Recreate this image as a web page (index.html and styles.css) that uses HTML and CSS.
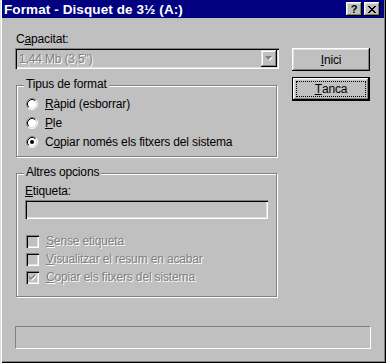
FILE: index.html
```html
<!DOCTYPE html>
<html lang="ca">
<head>
    <meta charset="UTF-8">
    <title>Format - Disquet de 3½ (A:)</title>
    <link rel="stylesheet" href="styles.css">
</head>
<body>

<div class="window">
    <div class="titlebar">
        <span class="title">Format - Disquet de 3½ (A:)</span>
        <div class="caption-btns">
            <span class="cap-btn help">?</span>
            <span class="cap-btn">
                <svg width="8" height="7" viewBox="0 0 8 7">
                    <path d="M0 0h2v1h1v1h2v-1h1v-1h2v1h-1v1h-1v1h-1v1h1v1h1v1h1v1h-2v-1h-1v-1h-2v1h-1v1h-2v-1h1v-1h1v-1h1v-1h-1v-1h-1v-1h-1z" fill="#000"/>
                </svg>
            </span>
        </div>
    </div>

    <div class="dialog">
        <div class="main-col">
            <div class="field-label">C<u>a</u>pacitat:</div>
            <div class="combo">
                <span class="combo-text disabled">1,44 Mb (3,5")</span>
                <span class="combo-btn">
                    <svg width="8" height="5" viewBox="0 0 8 5">
                        <polygon points="1,1 8,1 4.5,5" fill="#fff"/>
                        <polygon points="0,0 7,0 3.5,4" fill="#808080"/>
                    </svg>
                </span>
            </div>

            <div class="group group-format">
                <span class="group-title">Tipus de format</span>
                <div class="option">
                    <svg class="radio" width="12" height="12" viewBox="0 0 12 12">
                        <circle cx="6" cy="6" r="4.5" fill="#fff"/>
                        <path d="M2.11 9.89A5.5 5.5 0 0 1 9.89 2.11" stroke="#808080" fill="none"/>
                        <path d="M9.89 2.11A5.5 5.5 0 0 1 2.11 9.89" stroke="#fff" fill="none"/>
                        <path d="M2.82 9.18A4.5 4.5 0 0 1 9.18 2.82" stroke="#000" fill="none"/>
                        <path d="M9.18 2.82A4.5 4.5 0 0 1 2.82 9.18" stroke="#dfdfdf" fill="none"/>
                    </svg>
                    <span><u>R</u>àpid (esborrar)</span>
                </div>
                <div class="option">
                    <svg class="radio" width="12" height="12" viewBox="0 0 12 12">
                        <circle cx="6" cy="6" r="4.5" fill="#fff"/>
                        <path d="M2.11 9.89A5.5 5.5 0 0 1 9.89 2.11" stroke="#808080" fill="none"/>
                        <path d="M9.89 2.11A5.5 5.5 0 0 1 2.11 9.89" stroke="#fff" fill="none"/>
                        <path d="M2.82 9.18A4.5 4.5 0 0 1 9.18 2.82" stroke="#000" fill="none"/>
                        <path d="M9.18 2.82A4.5 4.5 0 0 1 2.82 9.18" stroke="#dfdfdf" fill="none"/>
                    </svg>
                    <span><u>P</u>le</span>
                </div>
                <div class="option">
                    <svg class="radio" width="12" height="12" viewBox="0 0 12 12">
                        <circle cx="6" cy="6" r="4.5" fill="#fff"/>
                        <path d="M2.11 9.89A5.5 5.5 0 0 1 9.89 2.11" stroke="#808080" fill="none"/>
                        <path d="M9.89 2.11A5.5 5.5 0 0 1 2.11 9.89" stroke="#fff" fill="none"/>
                        <path d="M2.82 9.18A4.5 4.5 0 0 1 9.18 2.82" stroke="#000" fill="none"/>
                        <path d="M9.18 2.82A4.5 4.5 0 0 1 2.82 9.18" stroke="#dfdfdf" fill="none"/>
                        <circle cx="6" cy="6" r="2" fill="#000"/>
                    </svg>
                    <span>C<u>o</u>piar només els fitxers del sistema</span>
                </div>
            </div>

            <div class="group group-other">
                <span class="group-title">Altres opcions</span>
                <div class="field-label inner"><u>E</u>tiqueta:</div>
                <div class="textbox"></div>
                <div class="check-list">
                    <div class="option check">
                        <span class="checkbox"></span>
                        <span class="disabled"><u>S</u>ense etiqueta</span>
                    </div>
                    <div class="option check">
                        <span class="checkbox"></span>
                        <span class="disabled"><u>V</u>isualitzar el resum en acabar</span>
                    </div>
                    <div class="option check">
                        <span class="checkbox">
                            <svg width="9" height="9" viewBox="0 0 9 9">
                                <path d="M2 4l2 2 4-4v2l-4 4-2-2z" fill="#fff"/>
                                <path d="M1 3l2 2 4-4v2l-4 4-2-2z" fill="#808080"/>
                            </svg>
                        </span>
                        <span class="disabled"><u>C</u>opiar els fitxers del sistema</span>
                    </div>
                </div>
            </div>
        </div>

        <div class="side-col">
            <div class="btn"><span class="btn-face"><u>I</u>nici</span></div>
            <div class="btn default"><span class="btn-face focus"><u>T</u>anca</span></div>
        </div>
    </div>

    <div class="status"></div>
</div>

</body>
</html>
```

FILE: styles.css
```css
body {
    margin: 0;
    font-family: "Liberation Sans", Arial, sans-serif;
    font-size: 12px;
    letter-spacing: -0.15px;
    color: #000;
    background-color: #c0c0c0;
}
.window {
    width: 386px;
    height: 363px;
    box-sizing: border-box;
    padding: 0 2px 2px 2px;
    background-color: #c0c0c0;
    box-shadow: inset 1px 0 #dfdfdf, inset 2px 0 #fff, inset -1px -1px #000, inset -2px -2px #808080;
}
.titlebar {
    height: 18px;
    background-color: #000080;
    display: flex;
    align-items: center;
    justify-content: space-between;
    padding: 0 4px 0 2px;
}
.title {
    color: #fff;
    font-weight: bold;
    font-size: 13.5px;
    letter-spacing: 0.1px;
}
.caption-btns {
    display: flex;
    gap: 2px;
}
.cap-btn {
    width: 16px;
    height: 14px;
    background-color: #c0c0c0;
    box-shadow: inset -1px -1px #000, inset 1px 1px #fff, inset -2px -2px #808080, inset 2px 2px #dfdfdf;
    display: flex;
    align-items: center;
    justify-content: center;
}
.cap-btn.help {
    font-weight: bold;
    font-size: 11px;
    line-height: 14px;
}
.dialog {
    display: flex;
}
.main-col {
    margin-left: 14px;
    width: 261px;
}
.side-col {
    margin-left: 15px;
    width: 78px;
}
.field-label {
    height: 13px;
    line-height: 13px;
    margin-top: 15px;
}
.field-label.inner {
    margin: 6px 0 0 8px;
}
.disabled {
    color: #808080;
    text-shadow: 1px 1px 0 #fff;
}
.combo {
    margin: 2px 0 0 -1px;
    width: 264px;
    height: 21px;
    box-sizing: border-box;
    padding: 2px;
    display: flex;
    align-items: center;
    box-shadow: inset 1px 1px #808080, inset 2px 2px #000, inset -1px -1px #fff, inset -2px -2px #dfdfdf;
}
.combo-text {
    padding-left: 2px;
}
.combo-btn {
    margin-left: auto;
    width: 16px;
    height: 17px;
    display: flex;
    align-items: center;
    justify-content: center;
    box-shadow: inset -1px -1px #000, inset 1px 1px #dfdfdf, inset -2px -2px #808080, inset 2px 2px #fff;
}
.group {
    margin-top: 16px;
    box-sizing: border-box;
    border: 1px solid #808080;
    box-shadow: 1px 1px 0 #fff, inset 1px 1px 0 #fff;
}
.group-format {
    height: 72px;
}
.group-other {
    height: 124px;
}
.group-title {
    display: block;
    width: fit-content;
    height: 13px;
    line-height: 13px;
    margin: -8px 0 0 7px;
    padding: 0 2px;
    background-color: #c0c0c0;
}
.group-format .group-title {
    margin-bottom: 3px;
}
.option {
    display: flex;
    align-items: center;
    height: 19px;
    padding-left: 9px;
}
.option .radio {
    margin-right: 7px;
    flex-shrink: 0;
}
.textbox {
    margin: 2px 0 0 8px;
    width: 243px;
    height: 19px;
    box-sizing: border-box;
    box-shadow: inset 1px 1px #808080, inset 2px 2px #000, inset -1px -1px #fff, inset -2px -2px #dfdfdf;
}
.check-list {
    margin-top: 13px;
}
.option.check {
    height: 18px;
}
.checkbox {
    width: 13px;
    height: 13px;
    margin-right: 7px;
    box-sizing: border-box;
    display: flex;
    align-items: center;
    justify-content: center;
    box-shadow: inset 1px 1px #808080, inset 2px 2px #000, inset -1px -1px #fff, inset -2px -2px #dfdfdf;
}
.btn {
    height: 23px;
    box-sizing: border-box;
    margin-top: 30px;
    display: flex;
    padding: 3px;
    box-shadow: inset -1px -1px #000, inset 1px 1px #fff, inset -2px -2px #808080, inset 2px 2px #dfdfdf;
}
.btn.default {
    margin-top: 6px;
    height: 24px;
    border: 1px solid #000;
}
.btn-face {
    flex: 1;
    display: flex;
    align-items: center;
    justify-content: center;
}
.btn-face.focus {
    border: 1px dotted #000;
}
.status {
    margin: 29px 0 0 13px;
    width: 356px;
    height: 23px;
    box-sizing: border-box;
    border-top: 1px solid #808080;
    border-left: 1px solid #808080;
    border-bottom: 1px solid #fff;
    border-right: 1px solid #fff;
}
```
